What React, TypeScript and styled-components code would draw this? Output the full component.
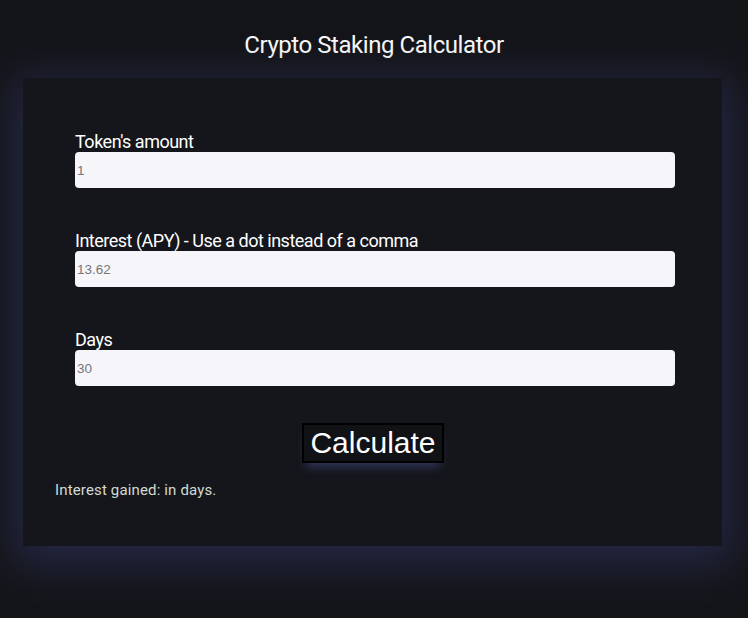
import React, { useState } from "react";
import styled, { createGlobalStyle } from "styled-components";

const GlobalStyle = createGlobalStyle`
    html, body {
        margin: 0;
        padding: 0;
        background: #141519;
    }
    body {
        font-family: Roboto, "Noto Sans", sans-serif;
        color: #ffffff;
    }
`;

type FieldProps = {
    label: string;
    value: string;
    onChange: (value: string) => void;
};

const Field: React.FC<FieldProps> = ({ label, value, onChange }) => (
    <FieldGroup>
        <Label>{label}</Label>
        <Input value={value} onChange={e => onChange(e.target.value)} />
    </FieldGroup>
);

export default function App() {
    const [amount, setAmount] = useState("1");
    const [apy, setApy] = useState("13.62");
    const [days, setDays] = useState("30");

    return (
        <Page>
            <GlobalStyle />
            <Title>Crypto Staking Calculator</Title>
            <Card>
                <Form>
                    <Field label="Token's amount" value={amount} onChange={setAmount} />
                    <Field label="Interest (APY) - Use a dot instead of a comma" value={apy} onChange={setApy} />
                    <Field label="Days" value={days} onChange={setDays} />
                </Form>
                <ButtonRow>
                    <CalcButton type="button">Calculate</CalcButton>
                </ButtonRow>
                <Result>Interest gained: in days.</Result>
            </Card>
        </Page>
    );
}

const Page = styled.div`
    min-height: 618px;
    display: flex;
    flex-direction: column;
    align-items: center;
    background: #141519;
`;

const Title = styled.h1`
    margin: 31px 0 0;
    height: 47px;
    font-size: 24px;
    font-weight: 400;
    letter-spacing: -0.45px;
    color: #ffffff;
`;

const Card = styled.div`
    width: 699px;
    height: 468px;
    box-sizing: border-box;
    margin-right: 3px;
    padding: 54px 32px 0;
    background: #15161b;
    box-shadow: 0 10px 40px 10px rgba(42, 46, 82, 0.75);
    display: flex;
    flex-direction: column;
`;

const Form = styled.div`
    display: flex;
    flex-direction: column;
    gap: 43px;
    width: 600px;
    margin-left: 20px;
`;

const FieldGroup = styled.div`
    display: flex;
    flex-direction: column;
`;

const Label = styled.label`
    font-size: 18px;
    line-height: 20px;
    letter-spacing: -0.5px;
    color: #ffffff;
`;

const Input = styled.input`
    height: 36px;
    box-sizing: border-box;
    border: none;
    border-radius: 4px;
    padding: 0 2px;
    background: #f5f5fa;
    font-family: "Liberation Sans", Arial, sans-serif;
    font-size: 13.5px;
    color: #767676;
    outline: none;
`;

const ButtonRow = styled.div`
    display: flex;
    justify-content: center;
    margin-top: 37px;
    padding-left: 1px;
`;

const CalcButton = styled.button`
    background: #111216;
    color: #ffffff;
    border: 2px solid #000000;
    padding: 0 6px;
    height: 40px;
    font-family: "Liberation Sans", Arial, sans-serif;
    font-size: 30px;
    line-height: 36px;
    cursor: pointer;
    box-shadow: 0 8px 10px -4px rgba(70, 78, 140, 0.55);
`;

const Result = styled.p`
    margin: 18px 0 0;
    font-size: 15px;
    letter-spacing: 0.15px;
    color: #d2dad2;
`;
